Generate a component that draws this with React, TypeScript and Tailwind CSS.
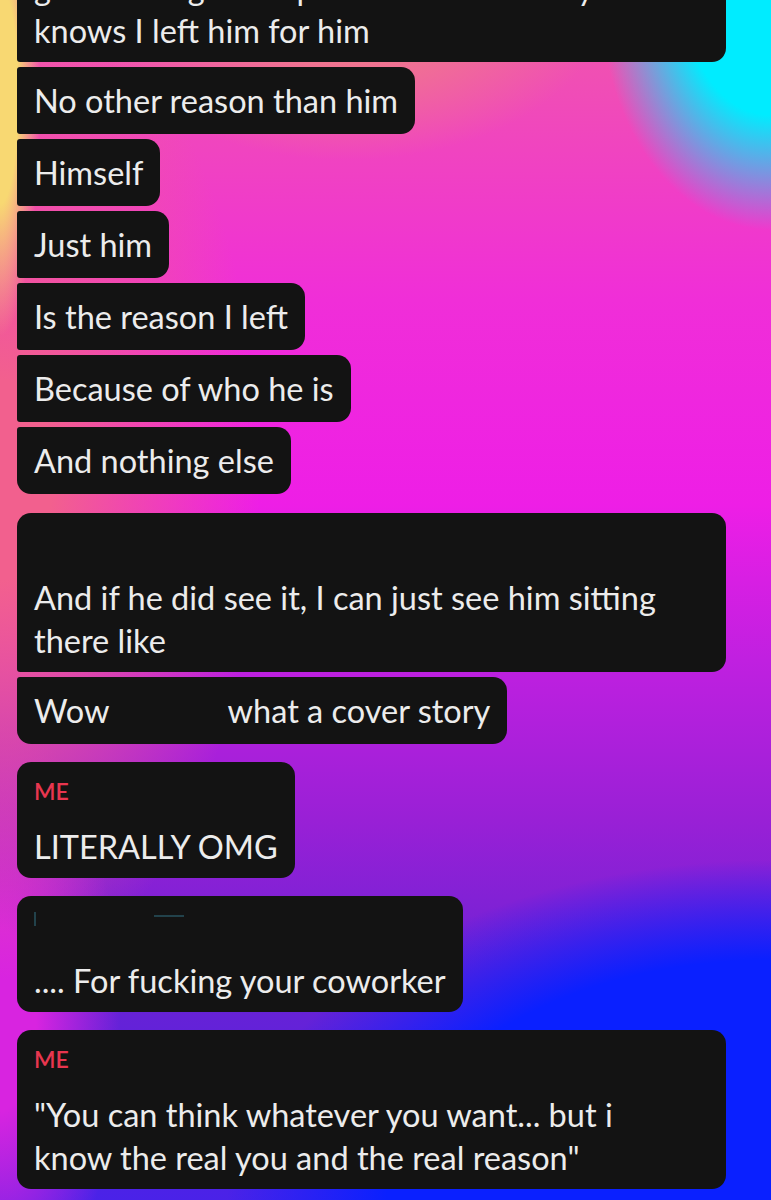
import React from "react";

// One chat bubble; grouped bubbles get tighter left corners
interface Msg {
  lines: React.ReactNode[];
  name?: "me" | "hidden" | "blank";
  width?: string;
}

interface Group {
  msgs: Msg[];
}

const groups: Group[] = [
  {
    msgs: [
      {
        lines: ["guess he'll get the point when he finally", "knows I left him for him"],
        width: "w-[709px]",
      },
      { lines: ["No other reason than him"] },
      { lines: ["Himself"] },
      { lines: ["Just him"] },
      { lines: ["Is the reason I left"] },
      { lines: ["Because of who he is"] },
      { lines: ["And nothing else"] },
    ],
  },
  {
    msgs: [
      {
        name: "blank",
        lines: ["And if he did see it, I can just see him sitting", "there like"],
        width: "w-[709px]",
      },
      {
        lines: [
          <>
            Wow<span className="inline-block w-[118px]" />what a cover story
          </>,
        ],
      },
    ],
  },
  { msgs: [{ name: "me", lines: ["LITERALLY OMG"] }] },
  { msgs: [{ name: "hidden", lines: [".... For fucking your coworker"] }] },
  {
    msgs: [
      {
        name: "me",
        lines: ['"You can think whatever you want... but i', 'know the real you and the real reason"'],
        width: "w-[709px]",
      },
    ],
  },
];

const Bubble = ({ msg, first, last }: { msg: Msg; first: boolean; last: boolean }) => {
  const corners = [
    "rounded-r-[14px]",
    first ? "rounded-tl-[14px]" : "rounded-tl-[3px]",
    last ? "rounded-bl-[14px]" : "rounded-bl-[3px]",
  ].join(" ");
  const pad = msg.name ? "pt-[14px] pb-[10px]" : msg.lines.length > 1 ? "pt-[12px] pb-[10px]" : "py-[12px]";

  return (
    <div className={`${msg.width ?? "w-fit"} bg-[#131313] px-[17px] ${pad} ${corners}`}>
      {msg.name === "me" && (
        <div className="h-[30px] mb-[19px] flex items-center text-[23px] font-semibold text-[#e8364f] leading-none">
          ME
        </div>
      )}
      {msg.name === "hidden" && (
        <div className="h-[30px] mb-[19px] flex items-start pt-[2px] gap-[118px] opacity-40">
          <span className="w-[2px] h-[14px] bg-[#3a8aa0]" />
          <span className="w-[30px] h-[2px] mt-[3px] bg-[#3a8aa0]" />
        </div>
      )}
      {msg.name === "blank" && <div className="h-[30px] mb-[19px]" />}
      {msg.lines.map((line, i) => (
        <div key={i} className="text-[32.5px] leading-[43px] text-[#ececec] whitespace-nowrap">
          {line}
        </div>
      ))}
    </div>
  );
};

export default function App() {
  return (
    <div
      className="w-[771px] h-[1200px] overflow-hidden font-[Lato,'Noto_Sans',sans-serif] bg-[radial-gradient(ellipse_40px_240px_at_0%_8%,#f8d872_45%,transparent_100%),radial-gradient(ellipse_170px_230px_at_100%_0%,#00ecff_50%,transparent_100%),radial-gradient(ellipse_260px_160px_at_45%_0%,#f07a8a_30%,transparent_100%),radial-gradient(ellipse_640px_400px_at_100%_100%,#0a20ff_60%,transparent_85%),radial-gradient(ellipse_260px_500px_at_0%_40%,#f2608e_20%,transparent_100%),radial-gradient(ellipse_120px_300px_at_0%_85%,#d824e0_30%,transparent_100%),linear-gradient(to_bottom,#f05aa8_0%,#f02ed8_25%,#ee1ee6_42%,#c020e0_55%,#9a20d6_68%,#6a22d4_82%,#4a22e8_100%)]"
    >
      <div className="flex flex-col gap-[18px] pl-[17px] -mt-[46px]">
        {groups.map((g, gi) => (
          <div key={gi} className={`flex flex-col gap-[5px] ${gi === 1 ? "mt-[1px]" : ""}`}>
            {g.msgs.map((m, mi) => (
              <Bubble key={mi} msg={m} first={mi === 0} last={mi === g.msgs.length - 1} />
            ))}
          </div>
        ))}
      </div>
    </div>
  );
}
